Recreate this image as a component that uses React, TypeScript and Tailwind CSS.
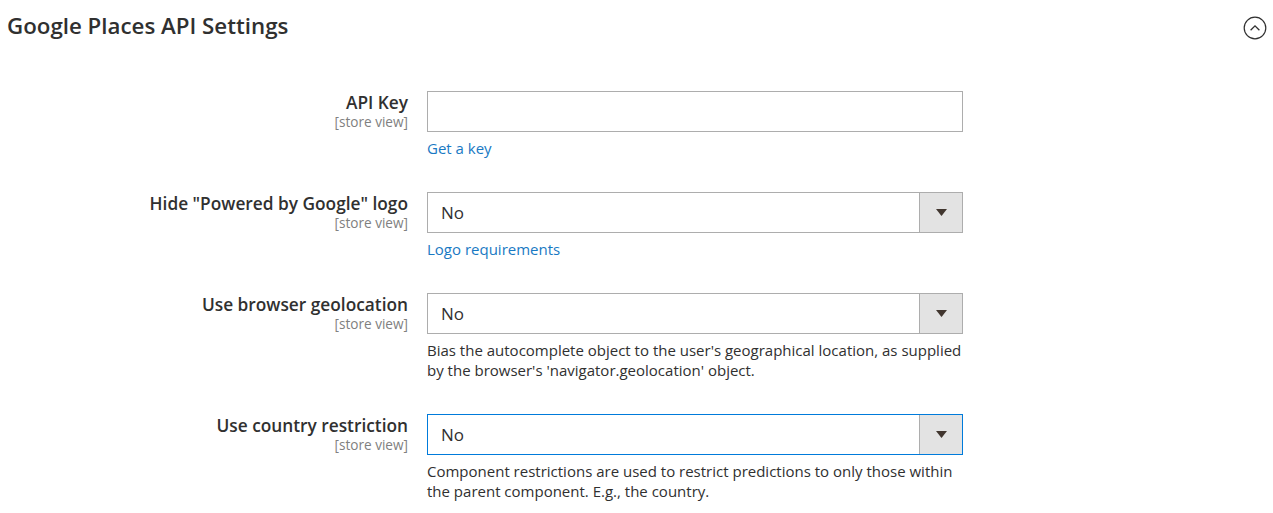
const font = { fontFamily: '"Open Sans", "Noto Sans", sans-serif' };

type Field = {
  label: string;
  kind: "text" | "select";
  value?: string;
  focused?: boolean;
  link?: string;
  note?: string[];
};

const fields: Field[] = [
  { label: "API Key", kind: "text", link: "Get a key" },
  { label: 'Hide "Powered by Google" logo', kind: "select", value: "No", link: "Logo requirements" },
  {
    label: "Use browser geolocation",
    kind: "select",
    value: "No",
    note: [
      "Bias the autocomplete object to the user's geographical location, as supplied",
      "by the browser's 'navigator.geolocation' object.",
    ],
  },
  {
    label: "Use country restriction",
    kind: "select",
    value: "No",
    focused: true,
    note: [
      "Component restrictions are used to restrict predictions to only those within",
      "the parent component. E.g., the country.",
    ],
  },
];

function Control({ field }: { field: Field }) {
  const border = field.focused ? "border-[#007bdb]" : "border-[#adadad]";
  if (field.kind === "text") {
    return <div className={`h-[41px] w-[536px] border ${border} bg-white`} />;
  }
  return (
    <div className={`flex h-[41px] w-[536px] items-stretch border ${border} bg-white`}>
      <div className="flex flex-1 items-center pl-[13px] text-[17px] text-[#303030]">{field.value}</div>
      <div className="flex w-[43px] items-center justify-center border-l border-[#adadad] bg-[#e3e3e3]">
        <svg width="11" height="7" viewBox="0 0 11 7">
          <path d="M0 0h11L5.5 7z" fill="#41362f" />
        </svg>
      </div>
    </div>
  );
}

export default function App() {
  return (
    <div className="min-h-screen w-[1273px] bg-white text-[#303030]" style={font}>
      <div className="flex items-center justify-between pl-[7px] pr-[6px] pt-[12px]">
        <h2 className="text-[22.3px] font-semibold leading-[28px] text-[#303030]">Google Places API Settings</h2>
        <svg width="24" height="24" viewBox="0 0 24 24" className="mt-[4px]">
          <circle cx="12" cy="12" r="10.8" fill="none" stroke="#303030" strokeWidth="1.2" />
          <path d="M7.6 14.2 12 9.8l4.4 4.4" fill="none" stroke="#303030" strokeWidth="1.3" />
        </svg>
      </div>

      <div className="mt-[51px] flex flex-col gap-[34px]">
        {fields.map((f) => (
          <div key={f.label} className="flex gap-[19px]">
            <div className="flex w-[408px] flex-col items-end pt-[2px]">
              <div className="text-[17.3px] font-semibold leading-[20px]">{f.label}</div>
              <div className="text-[13.6px] leading-[17px] text-[#808080]">[store view]</div>
            </div>
            <div className="flex flex-col">
              <Control field={f} />
              {f.link && (
                <a className="mt-[6px] text-[15px] leading-[20px] text-[#1979c3]">{f.link}</a>
              )}
              {f.note && (
                <div className="mt-[6px] text-[15px] leading-[20px] text-[#303030]">
                  {f.note.map((l) => (
                    <div key={l}>{l}</div>
                  ))}
                </div>
              )}
            </div>
          </div>
        ))}
      </div>
    </div>
  );
}
